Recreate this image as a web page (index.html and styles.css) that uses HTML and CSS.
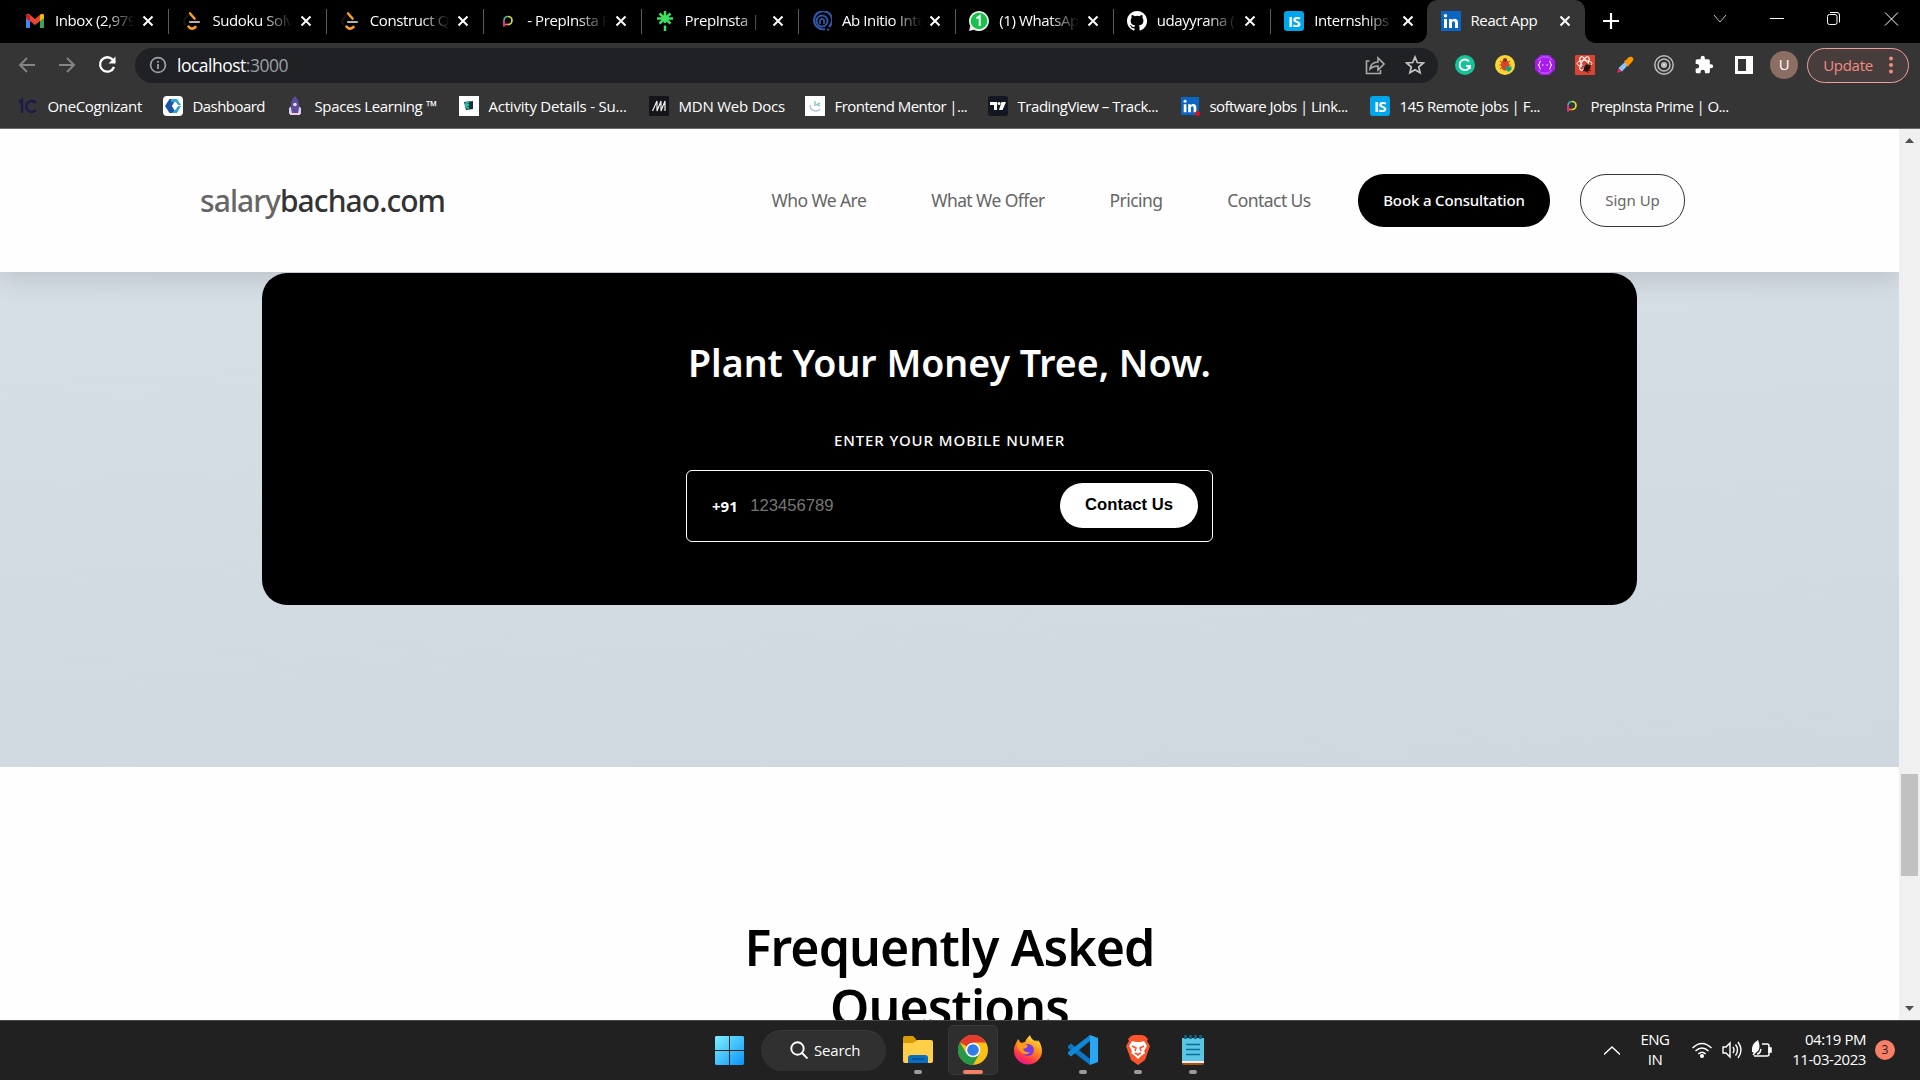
FILE: index.html
```html
<!DOCTYPE html>
<html lang="en">
<head>
<meta charset="utf-8">
<title>React App</title>
<link rel="stylesheet" href="styles.css">
</head>
<body>
<svg class="defs" width="0" height="0">
  <symbol id="x" viewBox="0 0 12 12"><path d="M1.5 1.5l9 9M10.500 1.500l-9 9" stroke="#fff" stroke-width="2" fill="none"/></symbol>
  <symbol id="leet" viewBox="0 0 20 20"><path d="M8 2.500l4.500 5M6.500 15.500q3 4 7 .5" stroke="#ffa116" stroke-width="2.600" fill="none" stroke-linecap="round"/><path d="M7 3L3 8q-2 3 1 6" stroke="#151515" stroke-width="2" fill="none"/><path d="M8 11h9" stroke="#b3b3b3" stroke-width="2.200" stroke-linecap="round"/></symbol>
  <symbol id="prep" viewBox="0 0 20 20"><path d="M7 9.500a4 4 0 0 1 4-4" stroke="#37b6a0" stroke-width="1.700" fill="none"/><path d="M11 5.500a4 4 0 0 1 0 8" stroke="#e3dc2c" stroke-width="1.700" fill="none"/><path d="M11 13.500H6.500" stroke="#f0702c" stroke-width="1.700"/><path d="M7 9v6.500" stroke="#e02c98" stroke-width="2"/></symbol>
  <symbol id="linkedin" viewBox="0 0 20 20"><path d="M0 0h20v20H0z" fill="#0a66c2"/><path d="M3 8h3v9H3zM8 8h2.800v1.300C12.600 6.800 17 7.300 17 11.500V17h-3v-5c0-2.500-3-2.200-3 0v5H8z" fill="#fff"/><circle cx="4.500" cy="4.800" r="1.700" fill="#fff"/></symbol>
</svg>

<div class="tabs">
  <div class="tab"><svg class="fav" viewBox="0 0 20 20"><path d="M1 5v12h4V9z" fill="#4285f4"/><path d="M15 9v8h4V5z" fill="#34a853"/><path d="M1 5q0-3 3-2l6 5 6-5q3-1 3 2v2l-9 7-9-7z" fill="#ea4335"/><path d="M15 4.200l1-1q3-1 3 1.800v2l-4 3z" fill="#fbbc04"/><path d="M1 5q0-1.500 1-2l3 2v5L1 7z" fill="#c5221f"/></svg><span class="title">Inbox (2,979)</span><svg class="close"><use href="#x"/></svg></div>
  <div class="tab"><svg class="fav"><use href="#leet"/></svg><span class="title">Sudoku Solver</span><svg class="close"><use href="#x"/></svg></div>
  <div class="tab"><svg class="fav"><use href="#leet"/></svg><span class="title">Construct Quad</span><svg class="close"><use href="#x"/></svg></div>
  <div class="tab"><svg class="fav"><use href="#prep"/></svg><span class="title">- PrepInsta Prime</span><svg class="close"><use href="#x"/></svg></div>
  <div class="tab"><svg class="fav" viewBox="0 0 20 20"><path d="M10 0v12M2 7.500h16M4.500 2.500l11 10M15.500 2.500l-11 10M10 14.500V20" stroke="#3fe05b" stroke-width="2.500"/></svg><span class="title">PrepInsta | Linktree</span><svg class="close"><use href="#x"/></svg></div>
  <div class="tab"><svg class="fav" viewBox="0 0 20 20"><g fill="none" stroke="#2f56a6"><path d="M13 18A9 9 0 1 1 17 16" stroke-width="2.200"/><circle cx="10" cy="10" r="5.500" stroke-width="2"/><path d="M8 13v-4l2-1.500L12 9v4" stroke-width="1.700"/></g><circle cx="16" cy="18.600" r="1.200" fill="#2f56a6"/></svg><span class="title">Ab Initio Interview</span><svg class="close"><use href="#x"/></svg></div>
  <div class="tab"><svg class="fav" viewBox="0 0 20 20"><path d="M0 20l1.300-5A10 10 0 1 1 5 18.700z" fill="#eee"/><circle cx="10" cy="10" r="8.300" fill="#16c24a"/><path d="M7.500 7.500L10.700 5v10" fill="none" stroke="#fff" stroke-width="2"/></svg><span class="title">(1) WhatsApp</span><svg class="close"><use href="#x"/></svg></div>
  <div class="tab"><svg class="fav" viewBox="0 0 16 16"><path fill="#fff" d="M8 0C3.580 0 0 3.580 0 8c0 3.540 2.290 6.530 5.470 7.590.4.070.55-.17.55-.38v-1.490c-2.010.37-2.530-.49-2.690-.94-.09-.23-.48-.94-.82-1.130-.28-.15-.68-.52-.01-.53.63-.01 1.080.58 1.230.82.72 1.210 1.870.87 2.330.66.070-.52.280-.87.510-1.070-1.780-.2-3.640-.89-3.640-3.950 0-.87.310-1.590.820-2.150-.08-.2-.36-1.020.080-2.120 0 0 .67-.21 2.200.82a7.600 7.600 0 0 1 4 0c1.530-1.040 2.200-.82 2.200-.82.440 1.100.160 1.920.080 2.120.51.560.820 1.270.820 2.150 0 3.070-1.870 3.750-3.650 3.950.290.250.540.730.540 1.480v2.200c0 .21.150.46.550.38A8 8 0 0 0 8 0z"/></svg><span class="title">udayyrana (Uday)</span><svg class="close"><use href="#x"/></svg></div>
  <div class="tab"><span class="fav is">IS</span><span class="title">Internships</span><svg class="close"><use href="#x"/></svg></div>
  <div class="tab active"><svg class="fav"><use href="#linkedin"/></svg><span class="title">React App</span><svg class="close"><use href="#x"/></svg></div>
  <svg class="newtab" viewBox="0 0 16 16"><path d="M8 0v16M0 8h16" stroke="#fff" stroke-width="2.200"/></svg>
  <svg class="winctl" viewBox="0 0 190 20" fill="none" stroke="#fff"><path d="M1 6l6 7 6-7" stroke="#bbb"/><path d="M57 9.500h14"/><rect x="114.500" y="5.500" width="9.500" height="10" rx="2"/><path d="M117 3.500h7q2.500 0 2.500 2.500v7.500M172 3.500l13 13M185 3.500l-13 13"/></svg>
</div>

<div class="toolbar">
  <div class="navicons">
    <svg viewBox="0 0 20 20" stroke="#858585" fill="none" stroke-width="1.900"><path d="M18 10H3M10 3l-7 7 7 7"/></svg>
    <svg viewBox="0 0 20 20" stroke="#858585" fill="none" stroke-width="1.900"><path d="M2 10h15M10 3l7 7-7 7"/></svg>
    <svg viewBox="0 0 20 20" stroke="#fff" fill="none" stroke-width="2.300"><path d="M17 12a7.200 7.200 0 1 1-1.500-7.500L18 7"/><path d="M18.500 1.500v7h-7z" fill="#fff" stroke="none"/></svg>
  </div>
  <div class="url">
    <svg class="info" viewBox="0 0 18 18"><circle cx="9" cy="9" r="7.400" fill="none" stroke="#9aa0a6" stroke-width="1.700"/><path d="M9 8v5M9 5v1.800" stroke="#9aa0a6" stroke-width="1.800"/></svg>
    <span class="address">localhost<span class="port">:3000</span></span>
    <svg class="share" viewBox="0 0 20 20" fill="none" stroke="#aaa" stroke-width="1.600"><path d="M4.500 6H1.500v12.500h14V15M5 14q1-7 8-7V3l6 6-6 6v-4q-5 0-8 3z"/></svg>
    <svg class="star" viewBox="0 0 20 20"><path d="M10 2l2.300 5.500 6 .5-4.600 4 1.400 5.800L10 14.700l-5.100 3.100L6.300 12 1.700 8l6-.5z" fill="none" stroke="#c4c4c4" stroke-width="1.700"/></svg>
  </div>
  <div class="exts">
    <svg viewBox="0 0 20 20"><circle cx="10" cy="10" r="10" fill="#15c39a"/><path d="M14 6.500A5.300 5.300 0 1 0 15 11h-4M15 11v3" fill="none" stroke="#fff" stroke-width="1.800"/></svg>
    <svg viewBox="0 0 20 20"><circle cx="10" cy="10" r="10" fill="#fcd535"/><path d="M5 6l10 8M15 6L5 14M4.500 10h11" stroke="#8a4a20"/><ellipse cx="10" cy="10" rx="4" ry="5.500" fill="#e0402c"/><circle cx="10" cy="5" r="2" fill="#7c3a24"/><path d="M10.500 11.500h6v3L13.500 17l-3-2.500z" fill="#10a37a"/></svg>
    <svg viewBox="0 0 20 20"><path d="M5.500 0h9L20 5.500v9L14.500 20h-9L0 14.500v-9z" fill="#a91af0"/><path d="M3 5l4-3h6l4 3M3 15l4 3h6l4-3" fill="none" stroke="#c673f5"/><path d="M6 6q-1.500 0-1.500 2T3 10q1.500 0 1.500 2T6 14M14 6q1.500 0 1.500 2t1.500 2q-1.500 0-1.500 2T14 14M7 10h1.500M11.500 10H13" stroke="#fff" fill="none"/></svg>
    <svg viewBox="0 0 20 20"><rect width="20" height="20" rx="1" fill="#dc4430"/><g fill="none" stroke="#fff"><ellipse cx="9.500" cy="8.500" rx="7.500" ry="3"/><ellipse cx="9.500" cy="8.500" rx="7.500" ry="3" transform="rotate(60 9.500 8.500)"/><ellipse cx="9.500" cy="8.500" rx="7.500" ry="3" transform="rotate(120 9.500 8.500)"/></g><ellipse cx="12" cy="13" rx="3" ry="4" transform="rotate(35 12 13)" fill="#24130f"/><path d="M7 11l9 5M8 16l8-6M12 8l1 10" stroke="#24130f"/></svg>
    <svg viewBox="0 0 20 20"><path d="M2 18l1.500-5L7 16.500z" fill="#e91e63"/><path d="M3.500 13L10 7l3 3-6 6.500z" fill="#8cc8f5"/><path d="M9 6l2-1 3-3q3-1 4 1t-1 4l-3 3-1 2z" fill="#ff9800"/></svg>
    <svg viewBox="0 0 20 20" fill="none" stroke="#bdbdbd" stroke-width="1.500"><circle cx="10" cy="10" r="9.200"/><circle cx="10" cy="10" r="6"/><circle cx="10" cy="10" r="2" fill="#ddd" stroke-width="2"/></svg>
    <svg viewBox="0 0 24 24"><path fill="#fff" d="M20.500 11H19V7c0-1.100-.9-2-2-2h-4V3.500a2.500 2.500 0 0 0-5 0V5H4c-1.100 0-2 .9-2 2v3.800h1.500a2.700 2.700 0 0 1 0 5.400H2V20c0 1.100.9 2 2 2h3.800v-1.500a2.700 2.700 0 0 1 5.400 0V22H17c1.100 0 2-.9 2-2v-4h1.500a2.500 2.500 0 0 0 0-5z"/></svg>
    <svg viewBox="0 0 20 20"><path d="M1 1h18v18H1zM4 4v12h8V4z" fill="#fff" fill-rule="evenodd"/></svg>
  </div>
  <span class="avatar">U</span>
  <div class="update">Update<svg viewBox="0 0 4 18"><g fill="#f28b82"><circle cx="2" cy="2.500" r="2"/><circle cx="2" cy="9" r="2"/><circle cx="2" cy="15.500" r="2"/></g></svg></div>
</div>

<div class="bookmarks">
  <div class="bm"><svg class="fav" viewBox="0 0 20 20" fill="none" stroke="#1c1a4c" stroke-width="2.400"><path d="M1 6l3-2v13M18 7a5.500 5.500 0 1 0 0 7"/></svg><span class="ls3">OneCognizant</span></div>
  <div class="bm"><svg class="fav" viewBox="0 0 20 20"><rect width="20" height="20" rx="4" fill="#fff"/><path d="M2 10l4.500-7H13l-4 7 4 7H6.500z" fill="#1c52a8"/><path d="M8 3h6l4 6h-3l-2-3H8zM9 17h5l4-7h-3l-3 4z" fill="#2da4d4"/><path d="M12 6l3 4-3 4-3-4z" fill="#fff"/></svg><span class="ls5">Dashboard</span></div>
  <div class="bm"><svg class="fav" viewBox="0 0 20 20"><path d="M4 12l4-3v9H4zM16 12l-4-3v9h4z" fill="#d8d2ee"/><path d="M10 0q5 5 4 12l-1 5H7l-1-5Q5 5 10 0z" fill="#5c4a9c"/><circle cx="10" cy="8.500" r="1.800" fill="#e4def4"/><path d="M5 18h10" stroke="#f0cfd4" stroke-width="2"/></svg><span class="ls3">Spaces Learning ™</span></div>
  <div class="bm"><svg class="fav" viewBox="0 0 20 20"><path d="M0 0h20v20H0z" fill="#fff"/><path d="M5 6l9-1v8l-7 1z" fill="#12333a"/><path d="M10 6a3 3 0 1 0 0 6M6 9h4" stroke="#20bfae" stroke-width="2" fill="none"/></svg><span class="ls2">Activity Details - Su...</span></div>
  <div class="bm"><svg class="fav" viewBox="0 0 20 20"><path d="M0 0h20v20H0z" fill="#15141a"/><path d="M3.500 15L8 5v10l4-10v10l4-10v10" fill="none" stroke="#eee" stroke-width="1.200"/></svg><span class="ls2">MDN Web Docs</span></div>
  <div class="bm"><svg class="fav" viewBox="0 0 20 20"><path d="M0 0h20v20H0z" fill="#fff"/><path d="M5 9q0 5 5 6 4 0 5-2" fill="none" stroke="#a9b4d4" stroke-width="1.200"/><path d="M10 5v5M15 7l-3 1.500 3 1.500" fill="none" stroke="#67bcc8" stroke-width="1.200"/></svg><span class="ls5">Frontend Mentor |...</span></div>
  <div class="bm"><svg class="fav" viewBox="0 0 20 20"><rect width="20" height="20" rx="3" fill="#131722"/><path d="M2 6h7v8H6V9H2zM13.500 6H18l-3.500 8H11z" fill="#fff"/><circle cx="11" cy="7.500" r="1.500" fill="#fff"/></svg><span class="ls4">TradingView – Track...</span></div>
  <div class="bm"><svg class="fav" viewBox="0 0 20 20"><svg x="1" y="1" width="18" height="18"><use href="#linkedin"/></svg><circle cx="17.500" cy="17.500" r="2.500" fill="#d11124"/></svg><span class="ls5">software Jobs | Link...</span></div>
  <div class="bm"><span class="fav is">IS</span><span class="ls5">145 Remote jobs | F...</span></div>
  <div class="bm"><svg class="fav"><use href="#prep"/></svg><span class="ls6">PrepInsta Prime | O...</span></div>
</div>

<div class="viewport">
  <div class="page">
    <header class="site-header">
      <div class="logo"><span>salary</span>bachao.com</div>
      <nav class="menu"><a>Who We Are</a><a>What We Offer</a><a>Pricing</a><a>Contact Us</a></nav>
      <a class="btn book">Book a Consultation</a>
      <a class="btn signup">Sign Up</a>
    </header>
    <section class="cta">
      <div class="card">
        <h2>Plant Your Money Tree, Now.</h2>
        <p>ENTER YOUR MOBILE NUMER</p>
        <div class="phone"><b>+91</b><span class="placeholder">123456789</span><span class="contact">Contact Us</span></div>
      </div>
    </section>
    <section class="faq"><h1>Frequently Asked<br>Questions</h1></section>
  </div>
  <div class="scrollbar">
    <svg viewBox="0 0 9 5"><path d="M0 5l4.500-5L9 5z" fill="#505050"/></svg>
    <div class="thumb"></div>
    <svg viewBox="0 0 9 5"><path d="M0 0h9L4.500 5z" fill="#505050"/></svg>
  </div>
</div>

<div class="taskbar">
  <div class="apps">
    <svg class="start" viewBox="0 0 29 29"><defs><linearGradient id="w" x1="0" y1="0" x2="29" y2="29" gradientUnits="userSpaceOnUse"><stop stop-color="#7df1ff"/><stop offset="1" stop-color="#0a93f8"/></linearGradient></defs><path d="M1 0h13v14H0V1zM15 0h13l1 1v13H15zM0 15h14v14H1l-1-1zM15 15h14v13l-1 1H15z" fill="url(#w)"/></svg>
    <div class="search"><svg viewBox="0 0 18 18" fill="none" stroke="#fff" stroke-width="1.900"><circle cx="7.500" cy="7.500" r="6.200"/><path d="M12 12l5.500 5.500"/></svg>Search</div>
    <div class="app run"><svg viewBox="0 0 30 30"><path d="M0 3q0-2 2-2h8l3 3v6H0z" fill="#d99a05"/><path d="M0 8h10l4-3h14q2 0 2 2v19q0 2-2 2H2q-2 0-2-2z" fill="#ffcf48"/><path d="M5 28v-5q0-3 3-3h14q3 0 3 3v5z" fill="#0a6fc2"/><path d="M9 24h12" stroke="#064a8c" stroke-width="1.500"/></svg></div>
    <div class="app on"><svg viewBox="0 0 30 30"><circle cx="15" cy="15" r="15" fill="#fbc116"/><path d="M15 15L2 7.500A15 15 0 0 1 28 7.500H15z" fill="#e33b2e"/><path d="M2 7.500A15 15 0 0 0 15 30l6.500-11.200L15 15 8.500 18.800z" fill="#279847"/><circle cx="15" cy="15" r="7.300" fill="#fff"/><circle cx="15" cy="15" r="5.800" fill="#2f7de9"/></svg></div>
    <div class="app"><svg viewBox="0 0 30 30"><defs><linearGradient id="ff" x1=".8" y1="0" x2=".3" y2="1"><stop stop-color="#fff04a"/><stop offset=".45" stop-color="#ff8a16"/><stop offset=".8" stop-color="#ff3150"/><stop offset="1" stop-color="#e0159a"/></linearGradient></defs><path d="M2 10l3-6 3 4 4-1q1-3 5-7 1 4 5 6l1-1 1 2 1-2q4 5 4 11A14 13.500 0 0 1 1 16q0-4 1-6z" fill="url(#ff)"/><circle cx="15" cy="15" r="6" fill="#7a3be0"/><path d="M4 8l7 .5 4 2.500q-2 3-5 3 2 4 7 3-3 4-8 1-5-4-5-10z" fill="#ff9a1c"/></svg></div>
    <div class="app run"><svg viewBox="0 0 30 30"><path d="M0 11l3-2.500L22 24v6L0 13z" fill="#0a78c4"/><path d="M0 19l3 2.500L22 6V0L0 17z" fill="#1088d8"/><path d="M22 0l8 3v24l-8 3z" fill="#2aa7f4"/></svg></div>
    <div class="app run"><svg viewBox="0 0 30 30"><path d="M8 1l3-1h8l3 1 3 3-1 2 3 5-5 14-7 5-7-5L3 11l3-5-1-2z" fill="#fb542b"/><path d="M9 6l4 1h4l4-1 3 5-3 5 1 2-4 3-3 3-3-3-4-3 1-2-3-5z" fill="#fff"/><path d="M9 11l4 2-1 3M21 11l-4 2 1 3M12 18l3 1.500 3-1.500M15 19v2" fill="none" stroke="#fb542b" stroke-width="1.600"/></svg></div>
    <div class="app run"><svg viewBox="0 0 30 30"><path d="M4 26h22v2q0 2-2 2H6q-2 0-2-2z" fill="#a8500a"/><path d="M4 3h22v25H4z" fill="#eee"/><path d="M4 3h22v23H4z" fill="#5cc5e6"/><path d="M8 9.500h14M8 14.500h14M8 19.500h14" stroke="#087192" stroke-width="1.600"/><path d="M7.500 0v4M12.500 0v4M17.500 0v4M22.500 0v4" stroke="#0a6684" stroke-width="2.600"/></svg></div>
  </div>
  <div class="tray">
    <svg class="up" viewBox="0 0 16 9"><path d="M0 8.500L8 1l8 7.500" fill="none" stroke="#fff" stroke-width="1.400"/></svg>
    <div class="lang">ENG<br>IN</div>
    <svg class="ic" viewBox="0 0 20 20" fill="none" stroke="#fff" stroke-width="1.500"><path d="M.5 8q9.500-9 19 0M3.500 11q6.500-6 13 0M6.300 14q3.700-3.500 7.400 0"/><circle cx="10" cy="16" r="1.300" fill="#fff"/></svg>
    <svg class="ic" viewBox="0 0 20 20" fill="none" stroke="#fff" stroke-width="1.400"><path d="M1 7h3l4-4v14l-4-4H1zM11 7q2 3 0 6M13.500 4.500q4 5.500 0 11M16 2q6 8 0 16"/></svg>
    <svg class="ic" viewBox="0 0 20 20" fill="none" stroke="#fff" stroke-width="1.500"><path d="M10 4h5q2 0 2 2v8q0 2-2 2H2"/><path d="M17 8h2v4h-2z" fill="#fff"/><path d="M0 12q-1-8 6-12 3 7 0 11-3 3-6 1z" fill="#fff" stroke="none"/><path d="M1 15l5-6M5 14q3 0 4-5"/></svg>
    <div class="clock">04:19 PM<br>11-03-2023</div>
    <span class="badge">3</span>
  </div>
</div>
</body>
</html>
```
FILE: styles.css
```css
* { box-sizing: border-box; }
body {
  margin: 0;
  width: 1920px;
  height: 1080px;
  overflow: hidden;
  display: flex;
  flex-direction: column;
  background: #fff;
  color: #fff;
  font: 15px/20px "Open Sans", sans-serif;
}
svg { display: block; flex: none; }
.defs { position: absolute; }
.fav { width: 20px; height: 20px; flex: none; }
.is {
  border-radius: 3px;
  background: #00a5ec;
  font: 700 15px/20px "Open Sans", sans-serif;
  letter-spacing: -.5px;
  text-align: center;
}

/* Browser tabs */
.tabs {
  height: 43px;
  flex: none;
  display: flex;
  background: #000;
  padding-left: 11px;
}
.tab {
  width: 157.400px;
  height: 43px;
  flex: none;
  display: flex;
  align-items: center;
  padding: 0 14px 2px 14px;
}
.tab + .tab { background: linear-gradient(#5a5a5a, #5a5a5a) left 9px / 1px 25px no-repeat; }
.title {
  width: 82px;
  margin: -1px 7px 0 10px;
  overflow: hidden;
  white-space: nowrap;
  letter-spacing: -.4px;
  mask-image: linear-gradient(90deg, #000 50px, transparent 80px);
}
.close { width: 12px; height: 12px; }
.tab.active {
  position: relative;
  width: 158.400px;
  margin-left: -1px;
  background: #353535;
  border-radius: 10px 10px 0 0;
}
.active .title { mask-image: none; }
.active::before, .active::after {
  content: "";
  position: absolute;
  bottom: 0;
  width: 10px;
  height: 10px;
}
.active::before { left: -10px; background: radial-gradient(circle at 0 0, #000 9.500px, #353535 10px); }
.active::after { right: -10px; background: radial-gradient(circle at 100% 0, #000 9.500px, #353535 10px); }
.newtab { width: 16px; height: 16px; margin: 13px 0 0 18px; }
.winctl { width: 190px; height: 20px; margin: 9px 0 0 94.500px; }

/* Toolbar */
.toolbar {
  height: 44px;
  flex: none;
  display: flex;
  align-items: center;
  background: #353535;
}
.navicons { width: 135px; display: flex; gap: 20px; padding-left: 17px; }
.navicons svg { width: 20px; height: 20px; }
.url {
  width: 1303px;
  height: 35px;
  display: flex;
  align-items: center;
  border-radius: 18px;
  background: #202124;
  padding: 0 13px;
}
.info { width: 18px; height: 18px; margin-left: 1px; }
.address { flex: 1; margin-left: 10px; font-size: 17.500px; letter-spacing: -.5px; }
.port { color: #9aa0a6; }
.share { width: 20px; height: 20px; margin-right: 20px; }
.star { width: 20px; height: 20px; }
.exts { display: flex; gap: 19.900px; margin-left: 17px; }
.exts svg { width: 20px; height: 20px; }
.avatar {
  width: 28px;
  height: 28px;
  margin-left: 16px;
  border-radius: 50%;
  background: #8d6e63;
  text-align: center;
  line-height: 27px;
}
.update {
  width: 102px;
  height: 35px;
  margin-left: 9px;
  padding: 0 15px;
  display: flex;
  align-items: center;
  justify-content: space-between;
  border: 1.500px solid #f0a09a;
  border-radius: 18px;
  background: #473d3d;
  color: #f28b82;
  letter-spacing: -.3px;
}
.update svg { width: 4px; height: 18px; }

/* Bookmarks */
.bookmarks {
  height: 42px;
  flex: none;
  display: grid;
  grid-template-columns: 145px 122px 174px 190px 156px 183px 192px 190px 191px 190px;
  align-items: center;
  background: #353535;
  border-bottom: 1px solid #6b6b6b;
  padding: 0 0 3px 18px;
}
.bm { display: flex; align-items: center; gap: 9.500px; white-space: nowrap; }
.bm span:last-child { margin-top: -1px; }
.ls2 { letter-spacing: -.22px; }
.ls3 { letter-spacing: -.37px; }
.ls4 { letter-spacing: -.45px; }
.ls5 { letter-spacing: -.55px; }
.ls6 { letter-spacing: -.62px; }

/* Web page */
.viewport { height: 891px; flex: none; display: flex; overflow: hidden; }
.page { width: 1899px; font-family: "Noto Sans", sans-serif; }
.site-header {
  position: relative;
  z-index: 1;
  height: 143px;
  display: flex;
  align-items: center;
  padding-left: 200px;
  background: #fefefe;
  box-shadow: 0 8px 25px rgba(0, 0, 0, .12);
}
.logo {
  width: 571.500px;
  color: #333;
  font-size: 30px;
  font-weight: 500;
  line-height: 40px;
  letter-spacing: -.930px;
}
.logo span { color: #666; }
.menu {
  width: 586.500px;
  margin-top: -1px;
  display: flex;
  gap: 65px;
  color: #666;
  font-size: 17.500px;
  letter-spacing: -.58px;
  white-space: nowrap;
}
.btn { height: 53px; border-radius: 26px; line-height: 53px; text-align: center; white-space: nowrap; }
.book { width: 192px; background: #000; font-weight: 500; letter-spacing: -.150px; }
.signup {
  width: 105px;
  margin-left: 30px;
  border: 1.500px solid #333;
  color: #666;
  line-height: 51px;
}
.cta {
  height: 495px;
  padding: 1px 262px 0;
  background: linear-gradient(177deg, #d7dfe6, #cfd7df);
}
.card {
  height: 332px;
  border-radius: 25px;
  background: #000;
  display: flex;
  flex-direction: column;
  align-items: center;
  padding-top: 64px;
}
.card h2 { margin: 0; font-size: 37.500px; font-weight: 600; line-height: 51px; letter-spacing: 0; }
.card p { margin: 41.500px 0 20.500px; font-weight: 500; letter-spacing: .920px; }
.phone {
  width: 527px;
  height: 72px;
  display: flex;
  align-items: center;
  border: 1.500px solid #fff;
  border-radius: 6px;
  padding: 0 14px 0 25px;
}
.phone b { margin-top: -1px; }
.placeholder {
  flex: 1;
  margin-left: 12.500px;
  color: #757575;
  font: 16.670px/20px "Liberation Sans", sans-serif;
}
.contact {
  width: 138px;
  height: 45px;
  margin-bottom: 2px;
  border-radius: 23px;
  background: #fff;
  color: #000;
  font: 700 16.670px/43px "Liberation Sans", sans-serif;
  text-align: center;
}
.faq { height: 400px; background: #fefefe; padding-top: 149.500px; }
.faq h1 {
  margin: 0;
  color: #000;
  font-size: 50px;
  font-weight: 600;
  line-height: 60px;
  letter-spacing: -.900px;
  text-align: center;
}
.scrollbar {
  position: relative;
  z-index: 2;
  width: 21px;
  background: #f0f0f0;
  display: flex;
  flex-direction: column;
  align-items: center;
  padding: 9px 0;
}
.scrollbar svg { width: 9px; height: 5px; }
.thumb { width: 17px; height: 102px; margin: 631px 0 auto; background: #c1c1c1; }

/* Taskbar */
.taskbar {
  height: 60px;
  flex: none;
  display: flex;
  justify-content: space-between;
  background: #212121;
  border-top: 1px solid #484848;
}
.apps { display: flex; align-items: center; padding-left: 715px; }
.start { width: 29px; height: 29px; }
.search {
  width: 125px;
  height: 41px;
  margin: 0 7px 0 17px;
  display: flex;
  align-items: center;
  gap: 6px;
  padding: 0 0 2px 29px;
  border-radius: 21px;
  background: #303030;
  border-top: 1px solid #3b3b3b;
  letter-spacing: -.2px;
}
.search svg { width: 18px; height: 18px; }
.app {
  position: relative;
  width: 50px;
  height: 50px;
  margin: -2px 5px 0 0;
  display: flex;
  align-items: center;
  justify-content: center;
}
.app svg { width: 30px; height: 30px; }
.on { background: #2e2e2e; border: 1px solid #383838; border-radius: 5px; }
.run::after, .on::after {
  content: "";
  position: absolute;
  bottom: 1px;
  left: 21px;
  width: 8px;
  height: 4px;
  border-radius: 2px;
  background: #9a9a9a;
}
.on::after { left: 14px; bottom: 0; width: 20px; background: #f67f66; }
.tray { display: flex; align-items: center; padding: 0 25px 1px 0; white-space: nowrap; }
.up { width: 16px; height: 9px; }
.lang { width: 30px; margin: -2px 22px 0 20px; text-align: center; letter-spacing: -.5px; }
.ic { width: 20px; height: 20px; margin-right: 10px; }
.clock { width: 84px; margin: -3px 9px 0 0; text-align: right; letter-spacing: -.45px; }
.badge {
  width: 20px;
  height: 20px;
  border-radius: 50%;
  background: #f67f66;
  color: #222;
  font-size: 12px;
  text-align: center;
}
```
